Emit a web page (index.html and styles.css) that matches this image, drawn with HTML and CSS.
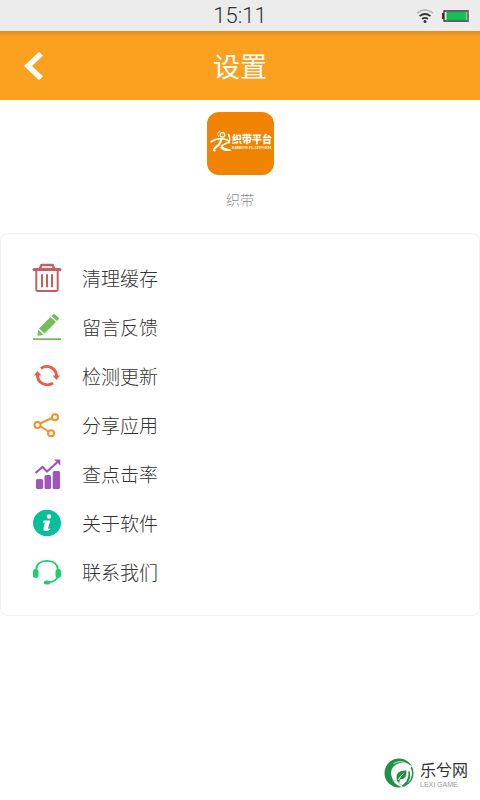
FILE: index.html
```html
<!DOCTYPE html>
<html lang="zh-CN">
<head>
<meta charset="utf-8">
<meta name="viewport" content="width=device-width, initial-scale=1">
<title>设置</title>
<link rel="stylesheet" href="styles.css">
</head>
<body>
<div class="status">
  <time class="clock">15:11</time>
  <div class="status-icons">
    <svg width="18" height="16" viewBox="0 0 18 16" fill="none" stroke-width="1.7">
      <path d="M1 5.2Q9-1.5 17 5.2" stroke="#b5b5b5"/>
      <path d="M3.500 8.200Q9 3.800 14.500 8.200M6 11Q9 8.600 12 11" stroke="#333"/>
      <circle cx="9" cy="13.500" r="1.500" fill="#333"/>
    </svg>
    <svg width="27" height="12" viewBox="0 0 27 12">
      <path d="M0 3h2v6H0z" fill="#333"/>
      <path d="M2 1h24v10H2z" fill="#eee" stroke="#333" stroke-width="1.300"/>
      <path d="M26 .5v11" stroke="#777" stroke-width="1.500"/>
      <path d="M4.500 2h20v8h-20z" fill="#12c158"/>
    </svg>
  </div>
</div>
<header class="bar">
  <button class="back" type="button" aria-label="返回">
    <svg width="20" height="28" viewBox="0 0 20 28" fill="none" stroke="#fff" stroke-width="5.500"><path d="M17 1.800 4 14l13 12.200"/></svg>
  </button>
  <h1 class="title">设置</h1>
</header>
<main>
  <section class="profile">
    <svg class="logo" width="67" height="63" viewBox="0 0 67 63">
      <rect width="67" height="63" rx="12" fill="#f08300"/>
      <g fill="none" stroke="#fff" stroke-linecap="round">
        <circle cx="15.500" cy="22.700" r="2.200" stroke-width="1.300"/>
        <path d="M4 30Q10 25.500 17 27T22 31" stroke-width="1.600"/>
        <path d="M14 27Q14 32 8.500 35.500Q6 37.500 7.500 38.500" stroke-width="2.200"/>
        <path d="M21.500 22.500Q25.500 29 18 32Q12 34 16 36.500L23 38" stroke-width="1.500"/>
        <path d="M11.500 24.500Q9 20.500 13 19.500" stroke-width=".8"/>
      </g>
      <path d="M15 33.500Q17 36.500 25 38.500Q16 40.500 13 35.500z" fill="#fff"/>
      <text class="logo-cn" x="25" y="31">织带平台</text>
      <text class="logo-en" x="25" y="37">RIBBON PLATFORM</text>
    </svg>
    <p class="name">织带</p>
  </section>
  <nav class="card" aria-label="设置">
    <a class="row" href="#cache">
      <svg width="30" height="30" viewBox="0 0 30 30" fill="none" stroke="#c75f60" stroke-width="2" stroke-linecap="round" stroke-linejoin="round">
        <path d="M2 6.500h26" stroke-width="3"/><path d="M8 5.500 9.500 2h11L22 5.500" stroke-width="2.500"/><path d="M4.300 8v18.500Q4.300 28 6 28h18q1.700 0 1.700-1.500V8"/><path d="M10 12v11.500M15 12v11.500M20 12v11.500"/>
      </svg>
      <span>清理缓存</span>
    </a>
    <a class="row" href="#feedback">
      <svg width="30" height="30" viewBox="0 0 30 30" fill="#72be5b">
        <path d="M21 2.500Q22 1.500 23 2.500L26.500 5.500Q27.500 6.500 26.500 7.500L25 9 19.500 4zM18.500 5 24 10 12.500 21.500 7 16.500zM6 17.500 11.500 22.500 5.500 24zM1 26.300h28v1.700H1z"/>
      </svg>
      <span>留言反馈</span>
    </a>
    <a class="row" href="#update">
      <svg width="30" height="30" viewBox="0 0 30 30" fill="none" stroke="#ef5b46" stroke-width="2.800">
        <path d="M9 7.300A9.800 9.300 0 0 1 24.500 15M21 22A9.800 9.300 0 0 1 5.500 14"/>
        <path d="M20.500 14.500h7.500L24.500 19zM2 14.500h7.500L5.500 10z" fill="#ef5b46" stroke="none"/>
      </svg>
      <span>检测更新</span>
    </a>
    <a class="row" href="#share">
      <svg width="30" height="30" viewBox="0 0 30 30" fill="none" stroke="#f5931f" stroke-width="2">
        <path d="M8 13.500 20 8M8 16 16.500 21.500"/><circle cx="5.500" cy="15" r="3"/><circle cx="23" cy="7.300" r="3"/><circle cx="19" cy="23.300" r="3"/>
      </svg>
      <span>分享应用</span>
    </a>
    <a class="row" href="#clicks">
      <svg width="30" height="30" viewBox="0 0 30 30" fill="#a055bb">
        <rect x="4" y="20" width="7" height="10" rx="1.500"/><rect x="12.500" y="16" width="6.500" height="14" rx="1.500"/><rect x="20.700" y="12" width="7.300" height="18" rx="1.500"/>
        <path d="M3.500 14 10.500 8 15 12.500 25.500 3" fill="none" stroke="#a055bb" stroke-width="2.200"/><path d="M22 .5h6.300v6z"/>
      </svg>
      <span>查点击率</span>
    </a>
    <a class="row" href="#about">
      <svg width="30" height="30" viewBox="0 0 30 30">
        <ellipse cx="15" cy="15" rx="14" ry="13.200" fill="#06bd9c"/>
        <circle cx="17" cy="8.500" r="2.300" fill="#fff"/>
        <path d="M11.500 12.500h6.700l-2.200 8.300q1 .2 2.500-.5-.8 2.700-4.500 2.700-3.300 0-2.500-3l1.300-5.200H11z" fill="#fff"/>
      </svg>
      <span>关于软件</span>
    </a>
    <a class="row" href="#contact">
      <svg width="30" height="30" viewBox="0 0 30 30" fill="#19cf70">
        <path d="M4 13C4.500 6 9.500 3.800 15 3.800S25.500 6 26 13M26 19Q24.500 24.500 16 25.500" fill="none" stroke="#19cf70" stroke-width="1.800"/>
        <rect x="1" y="12" width="5.500" height="9" rx="2.700"/><rect x="23.500" y="12" width="5.500" height="9" rx="2.700"/><ellipse cx="15" cy="25.500" rx="3.200" ry="2"/>
      </svg>
      <span>联系我们</span>
    </a>
  </nav>
</main>
<footer class="mark">
  <svg width="30" height="30" viewBox="0 0 30 30">
    <circle cx="15" cy="15" r="14.500" fill="#1f9145"/>
    <path d="M28 8Q20 2.500 13 6Q5.500 10 7.500 18T14.500 28.500Q7 24 9 16.500T18 8Q25 8 26 15T22 26.500Q28 22 28 15T20 6Q13 5 9.500 10.500T10 24Q13 28 19 29.300Q12 22 14 17T23 12.500Q24 20 16.500 22.500L17.500 28Q24.500 23 24.500 16T17.500 9.500T10.500 16.500T15.500 28Z" fill="#fff"/>
    <path d="M22.500 12.500Q12 12 12.500 20Q12.500 23 15.500 26Q15 23.500 16 21.500Q23 21.500 22.500 12.500z" fill="#1f9145"/>
    <path d="M14.500 22Q16 18 19.500 15.500" stroke="#fff" fill="none"/>
    <path d="M9.500 5.500Q17 1.500 23.500 6" stroke="#fff" stroke-width=".8" fill="none"/>
  </svg>
  <div class="mark-text">
    <span class="mark-cn">乐兮网</span>
    <span class="mark-en">LEXI GAME</span>
  </div>
</footer>
</body>
</html>
```
FILE: styles.css
```css
* { box-sizing: border-box; }

body {
  margin: 0;
  min-height: 100vh;
  display: flex;
  flex-direction: column;
  background: #fff;
  color: #333;
  font-family: "Noto Sans CJK SC", sans-serif;
  font-weight: 300;
}

svg { display: block; flex: none; }

.status {
  display: grid;
  grid-template-columns: 1fr auto 1fr;
  align-items: center;
  height: 31px;
  padding: 0 11px;
  background: #ececec;
}

.clock {
  grid-column: 2;
  font-family: Roboto, sans-serif;
  font-size: 22px;
  line-height: 31px;
}

.status-icons {
  display: flex;
  align-items: center;
  justify-content: flex-end;
  gap: 8px;
}

.bar {
  display: grid;
  grid-template-columns: 1fr auto 1fr;
  align-items: center;
  height: 69px;
  padding: 0 20px;
  background: linear-gradient(#e28f1d, #fca11f 6px);
}

.back {
  justify-self: start;
  padding: 0 4px;
  border: 0;
  background: none;
  cursor: pointer;
}

.title {
  margin: 0;
  color: #fff;
  font-size: 27px;
  font-weight: 400;
  line-height: 40px;
}

.profile {
  display: flex;
  flex-direction: column;
  align-items: center;
  gap: 12px;
  padding: 12px 0 22px;
}

.logo-cn {
  fill: #fff;
  font-size: 10px;
  font-weight: 900;
}

.logo-en {
  fill: #fff;
  font-family: "Liberation Serif", serif;
  font-size: 4px;
  font-weight: 700;
}

.name {
  margin: 0;
  color: #8c8c8c;
  font-size: 14px;
  line-height: 24px;
}

.card {
  padding: 19px 31px;
  border: 1px solid #f0f0f0;
  border-radius: 8px;
}

.row {
  display: flex;
  align-items: center;
  gap: 20px;
  height: 49px;
  color: #333;
  font-size: 19px;
  line-height: 28px;
  text-decoration: none;
}

.mark {
  display: flex;
  align-items: center;
  justify-content: flex-end;
  gap: 6px;
  margin-top: auto;
  padding: 0 12px 11px;
}

.mark-text {
  display: flex;
  flex-direction: column;
}

.mark-cn {
  font-size: 16px;
  font-weight: 400;
  line-height: 24px;
}

.mark-en {
  color: #999;
  font-family: "Liberation Sans", sans-serif;
  font-size: 7px;
  line-height: 8px;
}
```
